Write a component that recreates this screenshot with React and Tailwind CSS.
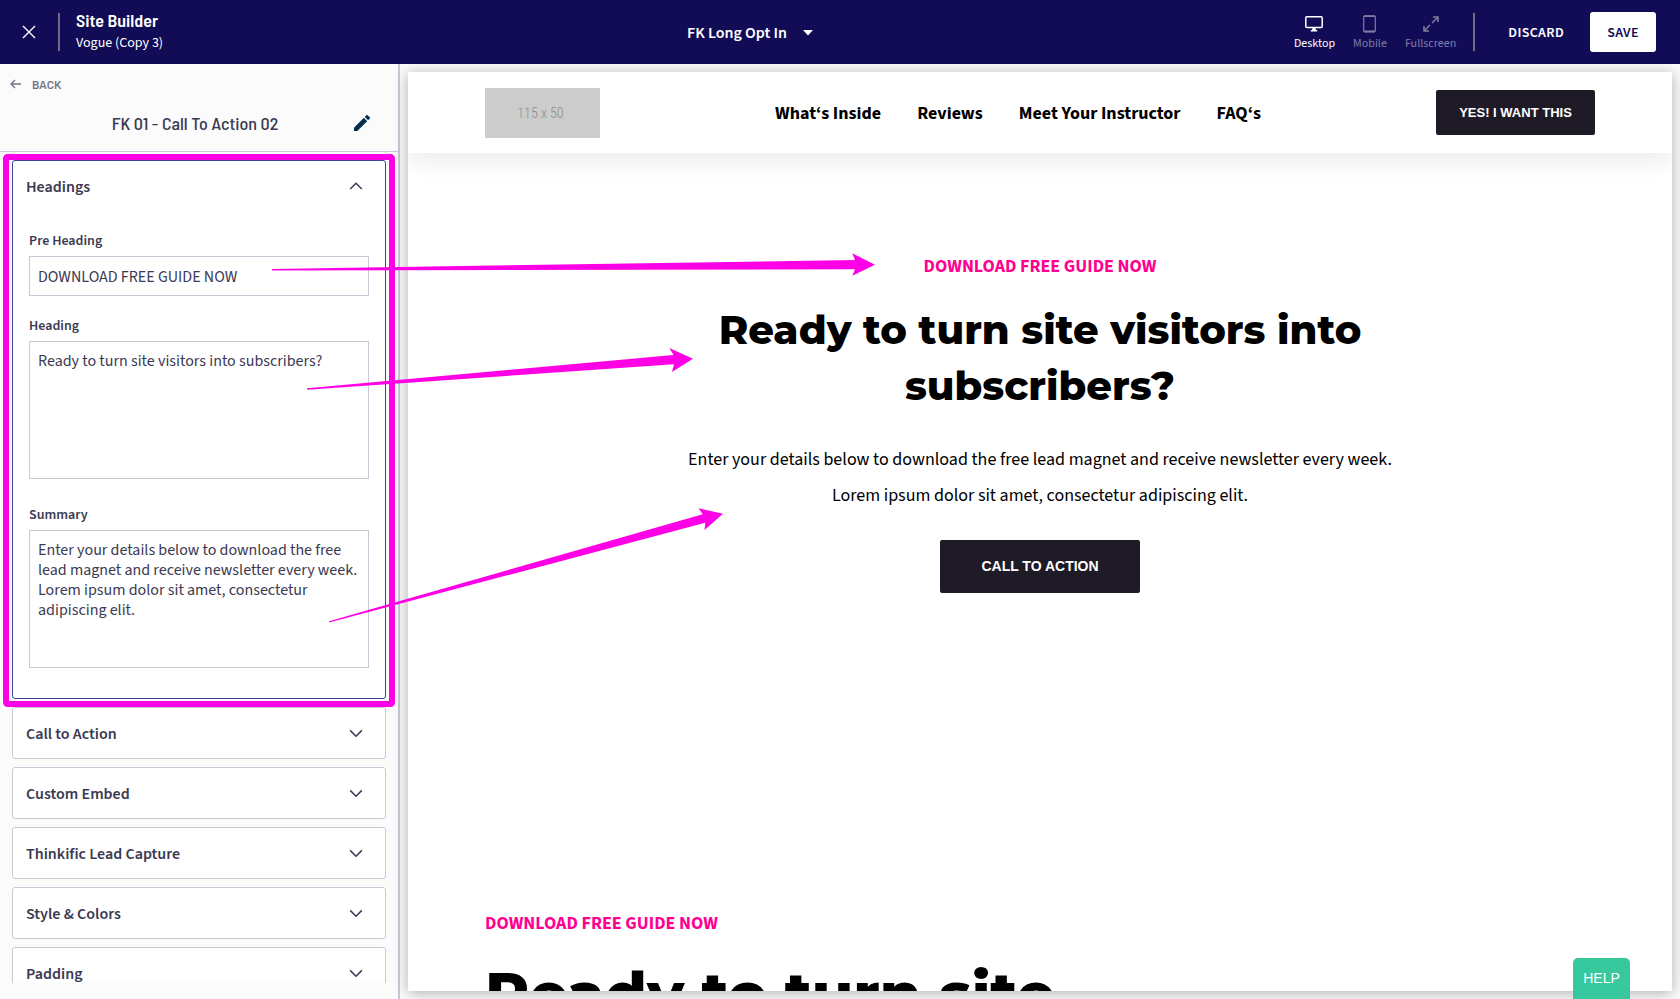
import React from "react";

const SANS = "font-['Source_Sans_Pro','Source_Sans_3','Noto_Sans_CJK_KR',sans-serif]";

function Chevron({ up }) {
  return (
    <svg width="14" height="14" viewBox="0 0 14 14" fill="none" stroke="#3b3a52" strokeWidth="1.5" aria-hidden="true">
      <path d={up ? "M1.2 9 7 3.2 12.8 9" : "M1.2 3.4 7 9.2l5.8-5.8"} />
    </svg>
  );
}

function Panel({ title, open, children }) {
  return (
    <section className={open ? "shrink-0 rounded-[3px] border border-[#3c3f94] bg-white" : "shrink-0 rounded-[3px] border border-[#c9c8d6] bg-white"}>
      <button type="button" aria-expanded={!!open} className="flex h-[50px] w-full items-center justify-between pt-px pr-[22px] pl-[13px] text-[16px] font-semibold text-[#3b3a52]">
        {title}
        <Chevron up={open} />
      </button>
      {children}
    </section>
  );
}

function Device({ label, active, children }) {
  return (
    <button type="button" className={active ? "flex flex-col items-center gap-px pt-0.5 text-[12px] leading-[18px] text-white" : "flex flex-col items-center gap-px pt-0.5 text-[12px] leading-[18px] text-[#7f7ca5]"}>
      <span className="flex h-5 items-center">{children}</span>
      {label}
    </button>
  );
}

const area = "block h-[138px] w-full resize-none border border-[#c9c8d6] bg-white px-2 pt-[9px] pb-2 text-[16px] leading-5 text-[#3b3a52] outline-none";
const fieldLabel = "mb-[5px] block text-[14px] leading-5 font-semibold text-[#3b3a52]";

function TopBar() {
  return (
    <header className="flex h-16 shrink-0 items-center justify-between bg-[#120c57] text-white">
      <div className="mr-[43px] flex items-center">
        <button type="button" aria-label="Close" className="flex h-10 w-[58px] items-center justify-center">
          <svg width="14" height="14" viewBox="0 0 14 14" stroke="#fff" strokeWidth="1.4" aria-hidden="true">
            <path d="M1 1l12 12M13 1 1 13" />
          </svg>
        </button>
        <span className="h-[38px] w-0.5 bg-[#6f6c87]" />
        <div className="ml-4">
          <h1 className="font-['Barlow_Semi_Condensed','Roboto_Condensed',sans-serif] text-[18px] leading-[18px] font-semibold">Site Builder</h1>
          <p className="mt-1 text-[14px] leading-5">Vogue (Copy 3)</p>
        </div>
      </div>
      <button type="button" className="flex items-center gap-4 pt-0.5 text-[16px] leading-5 font-semibold">
        FK Long Opt In
        <svg width="10" height="6" viewBox="0 0 10 6" fill="#fff" aria-hidden="true">
          <path d="M0 0h10L5 5.5z" />
        </svg>
      </button>
      <div className="flex items-center justify-end pr-6">
        <div className="flex gap-[18px]">
          <Device label="Desktop" active>
            <svg width="18" height="16" viewBox="0 0 18 16" fill="none" stroke="currentColor" aria-hidden="true">
              <rect x="0.8" y="0.8" width="16.4" height="10.8" rx="1" strokeWidth="1.5" />
              <path d="M7.5 12h3l.5 2h1.2v1.6H5.8V14H7z" fill="currentColor" stroke="none" />
            </svg>
          </Device>
          <Device label="Mobile">
            <svg width="13" height="18" viewBox="0 0 13 18" fill="none" stroke="currentColor" aria-hidden="true">
              <rect x="0.7" y="0.8" width="11.6" height="16.2" rx="1.2" strokeWidth="1.2" />
              <path d="M1 1.3h11M1 16.4h11" strokeWidth="1.6" />
            </svg>
          </Device>
          <Device label="Fullscreen">
            <svg width="16" height="16" viewBox="0 0 16 16" fill="none" stroke="currentColor" strokeWidth="1.5" aria-hidden="true">
              <path d="M10 1h5v5M15 1 9 7M6 15H1v-5M1 15l6-6" />
            </svg>
          </Device>
        </div>
        <span className="ml-[17px] h-[38px] w-0.5 bg-[#6f6c87]" />
        <button type="button" className="ml-[33px] pt-0.5 text-[14px] font-semibold tracking-wide">DISCARD</button>
        <button type="button" className="ml-[26px] h-10 w-[66px] rounded-[3px] bg-white pt-0.5 text-[14px] font-semibold tracking-wide text-[#120c57]">SAVE</button>
      </div>
    </header>
  );
}

function Sidebar() {
  return (
    <aside className="flex w-[400px] shrink-0 flex-col border-r-2 border-[#c9c8d6] bg-[#fbfbfb] pb-4">
      <div className="shrink-0 border-b border-[#c9c8d6]">
        <button type="button" className="mt-2.5 ml-2.5 flex h-5 items-center gap-[11px] font-['Barlow','Roboto',sans-serif] text-[12px] font-semibold text-[#757389]">
          <svg width="11" height="10" viewBox="0 0 11 10" fill="none" stroke="#757389" strokeWidth="1.3" aria-hidden="true">
            <path d="M11 5H1M5 1 1 5l4 4" />
          </svg>
          BACK
        </button>
        <div className="flex h-[57px] items-center pr-7">
          <h2 className="flex-1 pl-9 text-center font-['Barlow_Semi_Condensed','Roboto_Condensed',sans-serif] text-[18px] leading-6 font-medium text-[#3b3a52]">FK 01 - Call To Action 02</h2>
          <button type="button" aria-label="Edit name">
            <svg width="16" height="16" viewBox="3 3 18 18" fill="#00304f" aria-hidden="true">
              <path d="M3 17.25V21h3.75L17.81 9.94l-3.75-3.75zM20.71 7.04a1 1 0 0 0 0-1.41l-2.34-2.34a1 1 0 0 0-1.41 0l-1.83 1.83 3.75 3.75z" />
            </svg>
          </button>
        </div>
      </div>
      <div className="flex min-h-0 flex-1 flex-col gap-2 overflow-hidden px-3 pt-2">
        <Panel title="Headings" open>
          <div className="flex flex-col px-4 pt-5 pb-6">
            <div className="mb-5">
              <label htmlFor="pre" className={fieldLabel}>Pre Heading</label>
              <input id="pre" defaultValue="DOWNLOAD FREE GUIDE NOW" className="block h-10 w-full border border-[#c9c8d6] bg-white px-2 pt-0.5 text-[16px] text-[#3b3a52] outline-none" />
            </div>
            <div className="mb-[26px]">
              <label htmlFor="heading" className={fieldLabel}>Heading</label>
              <textarea id="heading" defaultValue="Ready to turn site visitors into subscribers?" className={area} />
            </div>
            <div className="mb-1.5">
              <label htmlFor="summary" className={fieldLabel}>Summary</label>
              <textarea id="summary" defaultValue="Enter your details below to download the free lead magnet and receive newsletter every week. Lorem ipsum dolor sit amet, consectetur adipiscing elit." className={area} />
            </div>
          </div>
        </Panel>
        <Panel title="Call to Action" />
        <Panel title="Custom Embed" />
        <Panel title="Thinkific Lead Capture" />
        <Panel title="Style & Colors" />
        <Panel title="Padding" />
      </div>
    </aside>
  );
}

function Preview() {
  return (
    <main className="min-w-0 flex-1 bg-[#fbfbfb] p-2">
      <div className="flex h-full flex-col overflow-hidden bg-white text-black shadow-[0_2px_14px_rgba(0,0,0,0.3)]">
        <div className="flex h-[81px] shrink-0 items-center justify-between px-[77px] shadow-[0_10px_20px_rgba(0,0,0,0.07)]">
          <div className="flex h-[50px] w-[115px] items-center justify-center bg-[#ccc] pt-0.5 pr-1 font-['Roboto_Condensed','Liberation_Sans',sans-serif] text-[14px] font-light text-[#8c8c8c]">115 x 50</div>
          <nav className="flex gap-9 pt-0.5 text-[18px] font-bold">
            <a href="#inside">What‘s Inside</a>
            <a href="#reviews">Reviews</a>
            <a href="#instructor">Meet Your Instructor</a>
            <a href="#faq">FAQ‘s</a>
          </nav>
          <button type="button" className="h-[45px] w-[159px] rounded-[2px] bg-[#1f1b26] font-['Liberation_Sans',sans-serif] text-[13px] font-bold text-white">YES! I WANT THIS</button>
        </div>
        <section className="flex shrink-0 flex-col items-center px-[77px] pt-[102px] text-center">
          <p className="text-[18px] leading-6 font-bold text-[#ff0090]">DOWNLOAD FREE GUIDE NOW</p>
          <h2 className="mt-[23px] max-w-[740px] font-['Montserrat','Inter',sans-serif] text-[40px] leading-[56px] font-extrabold">Ready to turn site visitors into subscribers?</h2>
          <p className="mt-7 max-w-[740px] text-[18px] leading-9">Enter your details below to download the free lead magnet and receive newsletter every week. Lorem ipsum dolor sit amet, consectetur adipiscing elit.</p>
          <button type="button" className="mt-[26px] h-[53px] w-[200px] rounded-[2px] bg-[#1f1b26] font-['Liberation_Sans',sans-serif] text-[14px] font-bold text-white">CALL TO ACTION</button>
        </section>
        <section className="shrink-0 px-[77px] pt-[319px]">
          <p className="text-[18px] leading-6 font-bold text-[#ff0090]">DOWNLOAD FREE GUIDE NOW</p>
          <h2 className="mt-4 max-w-[740px] font-['Montserrat','Inter',sans-serif] text-[60px] leading-[84px] font-extrabold">Ready to turn site visitors into subscribers?</h2>
        </section>
      </div>
    </main>
  );
}

function Annotations() {
  return (
    <div className="pointer-events-none absolute inset-0 overflow-hidden">
      <svg width="1680" height="999" viewBox="0 0 1680 999" fill="#ff00e6" aria-hidden="true">
        <rect x="6" y="157" width="386" height="547" rx="1.5" fill="none" stroke="#ff00e6" strokeWidth="6" />
        <path d="M272 269 855 260 852.3 253.3 875 264.7 852.3 275.7 855 269.2 272 270.6z" />
        <path d="M307 388.3 673.5 355 669.3 348 693 358.8 672 372 674 364.2 307 389.8z" />
        <path d="M329 621.3 702.7 514.3 698.5 508.3 723 513.7 704.5 530 705.3 522.8 329 622.6z" />
      </svg>
    </div>
  );
}

export default function App() {
  return (
    <div className={`relative flex h-screen flex-col overflow-hidden ${SANS}`}>
      <TopBar />
      <div className="flex min-h-0 flex-1">
        <Sidebar />
        <Preview />
      </div>
      <Annotations />
      <button type="button" className="absolute right-[50px] bottom-0 h-[41px] w-[57px] rounded-t-[5px] bg-[#37c89d] font-['Liberation_Sans',sans-serif] text-[14px] text-white">HELP</button>
    </div>
  );
}
